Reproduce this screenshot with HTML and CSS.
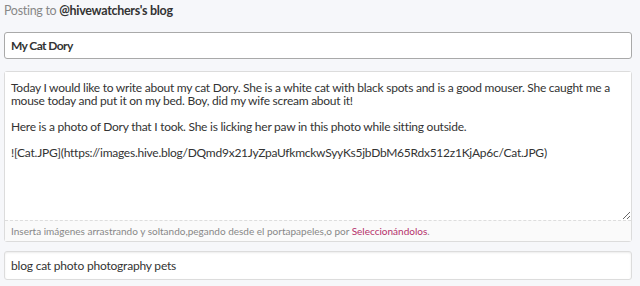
FILE: index.html
```html
<!DOCTYPE html>
<html lang="es">
<head>
    <meta charset="UTF-8">
    <title>Posting</title>
    <link rel="stylesheet" href="styles.css">
</head>
<body>
    <div class="wrap">
        <div class="posting">Posting to <strong>@hivewatchers's blog</strong></div>
        <input class="title-input" type="text" value="My Cat Dory">
        <div class="editor">
            <textarea class="body-input">Today I would like to write about my cat Dory. She is a white cat with black spots and is a good mouser. She caught me a mouse today and put it on my bed. Boy, did my wife scream about it!

Here is a photo of Dory that I took. She is licking her paw in this photo while sitting outside.

![Cat.JPG](https://images.hive.blog/DQmd9x21JyZpaUfkmckwSyyKs5jbDbM65Rdx512z1KjAp6c/Cat.JPG)</textarea>
            <div class="editor-footer">Inserta imágenes arrastrando y soltando,pegando desde el portapapeles,o por <a href="#">Seleccionándolos</a>.</div>
        </div>
        <input class="tags-input" type="text" value="blog cat photo photography pets">
    </div>
</body>
</html>
```

FILE: styles.css
```css
body {
    margin: 0;
    background-color: #f6f7fa;
    font-family: Lato, "Liberation Sans", sans-serif;
    color: #333;
}
.wrap {
    width: 628px;
    padding: 3px 0 0 4px;
}
.posting {
    font-size: 12.5px;
    letter-spacing: -0.3px;
    line-height: 15px;
    color: #888;
    margin-bottom: 14px;
}
.posting strong {
    color: #333;
}
.title-input, .tags-input {
    display: block;
    box-sizing: border-box;
    width: 100%;
    margin: 0;
    padding: 0 6px;
    font-family: inherit;
    font-size: 12px;
    letter-spacing: -0.2px;
    color: #333;
    background-color: #fff;
    border-radius: 3px;
    outline: none;
}
.title-input {
    height: 27px;
    border: 1px solid #a9a9a9;
    font-weight: bold;
    letter-spacing: -0.6px;
}
.tags-input {
    height: 29px;
    margin-top: 9px;
    border: 1px solid #dcdcdc;
    box-shadow: inset 0 1px 2px rgba(0, 0, 0, 0.08);
}
.editor {
    margin-top: 12px;
    border: 1px solid #dcdcdc;
    border-radius: 3px;
    background-color: #fff;
}
.body-input {
    display: block;
    box-sizing: border-box;
    width: 100%;
    height: 148px;
    margin: 0;
    padding: 9px 6px;
    border: none;
    outline: none;
    font-family: inherit;
    font-size: 12px;
    letter-spacing: -0.25px;
    line-height: 13px;
    color: #333;
    background-color: #fff;
}
.editor-footer {
    border-top: 1px dashed #ddd;
    background-color: #fafafa;
    font-size: 10px;
    line-height: 20px;
    padding: 0 6px;
    color: #888;
}
.editor-footer a {
    color: #b5306a;
    text-decoration: none;
}
```
